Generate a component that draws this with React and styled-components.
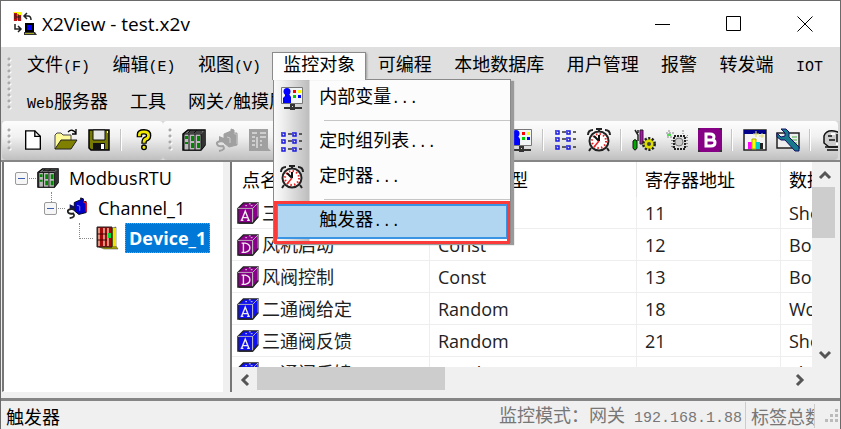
import React, { useState } from "react";
import styled, { createGlobalStyle, css } from "styled-components";

const GlobalStyle = createGlobalStyle`
  * {
    box-sizing: border-box;
  }

  body {
    margin: 0;
    font-family: "Open Sans", "Noto Sans CJK SC", sans-serif;
    font-size: 18px;
    line-height: 24px;
    color: #000;
  }

  button {
    font: inherit;
    color: inherit;
    padding: 0;
    border: none;
    background: none;
  }

  svg {
    display: block;
    flex: none;
  }
`;

const Window = styled.div`
  height: 100vh;
  display: flex;
  flex-direction: column;
  overflow: hidden;
  border: 1px solid #6b6a6b;
  border-bottom: none;
  background: #f0f0f0;
`;

const TitleBar = styled.header`
  height: 46px;
  flex: none;
  display: flex;
  align-items: center;
  padding-left: 12px;
  background: #fff;
`;

const Title = styled.h1`
  flex: 1;
  margin: 0 0 0 5px;
  font-size: 19px;
  font-weight: 400;
`;

const WindowButton = styled.button`
  width: 71px;
  height: 46px;
  display: flex;
  align-items: center;
  justify-content: center;
`;

const MenuBar = styled.nav`
  flex: none;
  display: flex;
  align-items: center;
  height: 74px;
  padding: 0 6px;
  font-family: "Noto Sans CJK SC", sans-serif;
  background: #dfdfdf;
`;

const Grip = styled.span`
  flex: none;
  width: 5px;
  height: ${(props) => props.$height}px;
  margin-right: 4px;
  background-image: radial-gradient(circle at 2px 2px, #aaa 1px, transparent 2px),
    radial-gradient(circle at 3px 3px, #fff 1px, transparent 2px);
  background-size: 5px 6px;
`;

const MenuRows = styled.div`
  flex: 1;
`;

const MenuRow = styled.div`
  height: 37px;
  display: flex;
  align-items: center;
  justify-content: ${(props) => (props.$spread ? "space-between" : "flex-start")};
`;

const MenuSlot = styled.div`
  position: relative;
`;

const MenuButton = styled.button`
  display: block;
  position: relative;
  height: 28px;
  padding: 0 10px 6px;
  line-height: 20px;
  white-space: nowrap;
  border: 1px solid transparent;
  border-bottom: none;

  ${(props) =>
    props.$open &&
    css`
      z-index: 3;
      border-color: #8a8a8a;
      background: #fdfdfd;
      box-shadow: 2px 0 2px -1px #9a9a9a;
    `}
`;

const Mono = styled.span`
  font-family: "Liberation Mono", monospace;
  font-size: 15px;
`;

const Popup = styled.ul`
  position: absolute;
  z-index: 2;
  top: 27px;
  left: 1px;
  width: 238px;
  margin: 0;
  padding: 1px 0 3px;
  list-style: none;
  border: 1px solid #8a8a8a;
  background: linear-gradient(to right, #fafafa, #f0f0f0 8px, #bdbdbd 35px, #fcfcfc 36px);
  box-shadow: 3px 2px 1px #9a9a9a;
`;

const PopupItem = styled.button`
  position: relative;
  width: 100%;
  height: 35px;
  display: flex;
  align-items: center;
  text-align: left;
  white-space: nowrap;

  ${(props) =>
    props.$active &&
    css`
      width: 232px;
      margin: 0 2px;
      border: 2px solid #3a94e4;
      background: #b1d6f2;

      &::after {
        content: "";
        position: absolute;
        inset: -5px -4px -7px;
        border: 3px solid #fb3a3a;
      }
    `}
`;

const PopupIcon = styled.span`
  width: ${(props) => (props.$active ? 41 : 45)}px;
  padding-left: 6px;
`;

const PopupText = styled.span`
  padding-bottom: 2px;
`;

const PopupLine = styled.li`
  height: 9px;
  margin-left: 50px;
  border-bottom: 4px solid #fcfcfc;
  border-top: 4px solid #fcfcfc;
  background: #c6c6c6;
`;

const ToolBar = styled.div`
  flex: none;
  display: flex;
  height: 39px;
  padding: 0 2px 0 1px;
  overflow: hidden;
  background: #d8d8d8;
`;

const ToolGroup = styled.div`
  flex: ${(props) => (props.$grow ? "1 1 0" : "none")};
  min-width: 0;
  overflow: hidden;
  display: flex;
  align-items: center;
  padding: 0 3px 2px 5px;
  border-radius: 4px;
  background: linear-gradient(#fdfdfd, #f1f1f1 40%, #bfbfbf);
`;

const ToolButton = styled.button`
  flex: none;
  width: 33px;
  height: 34px;
  display: flex;
  align-items: center;
  justify-content: center;
`;

const ToolLine = styled.span`
  flex: none;
  width: 2px;
  height: 22px;
  margin: 0 5px;
  border-left: 1px solid #c4c4c4;
  border-right: 1px solid #fff;
`;

const ToolSpace = styled.span`
  flex: none;
  width: 228px;
`;

const Workspace = styled.main`
  flex: 1;
  min-height: 0;
  display: flex;
  gap: 7px;
  padding: 0 3px 6px 1px;
  border-top: 2px solid #868686;
  border-bottom: 3px solid #858585;
`;

const Tree = styled.ul`
  width: 221px;
  flex: none;
  margin: 0;
  padding: 1px 0 0;
  list-style: none;
  border-left: 2px solid #777;
  border-bottom: 1px solid #fff;
  background: #fff;
`;

const TreeRow = styled.li`
  height: 30px;
  display: flex;
  align-items: center;
  padding-left: ${(props) => 11 + props.$level * 29}px;
`;

const Toggle = styled.button`
  position: relative;
  width: 13px;
  height: 13px;
  border: 1px solid #9a9a9a;
  border-radius: 2px;
  background: #f6f6f6;

  &::after {
    content: "";
    position: absolute;
    top: 5px;
    left: 2px;
    width: 7px;
    height: 1px;
    background: #3d5fae;
  }

  &::before {
    content: "";
    position: absolute;
    display: ${(props) => (props.$branch ? "block" : "none")};
    bottom: 12px;
    left: 6px;
    height: 10px;
    border-left: 1px dotted #888;
  }
`;

const Dash = styled.span`
  width: 7px;
  margin: 0 1px;
  border-top: 1px dotted #888;
`;

const Elbow = styled.span`
  width: 14px;
  height: 16px;
  margin: 0 2px 14px 6px;
  border-left: 1px dotted #888;
  border-bottom: 1px dotted #888;
`;

const TreeLabel = styled.span`
  margin-left: 6px;
  padding: 2px 3px;
  border: 1px dotted transparent;

  ${(props) =>
    props.$selected &&
    css`
      font-weight: 700;
      color: #fff;
      border-color: #e08a30;
      background: #0078d7;
    `}
`;

const Grid = styled.section`
  flex: 1;
  min-width: 0;
  display: grid;
  grid-template-columns: minmax(0, 1fr) 25px;
  grid-template-rows: minmax(0, 1fr) 25px;
  border-left: 2px solid #777;
`;

const TableView = styled.div`
  overflow: hidden;
  background: #fff;
`;

const Table = styled.table`
  table-layout: fixed;
  width: 648px;
  border-collapse: separate;
  border-spacing: 0;
`;

const Th = styled.th`
  width: ${(props) => props.$width}px;
  height: 35px;
  padding: 0 0 0 ${(props) => props.$pad}px;
  font-weight: 400;
  text-align: left;
  border-right: 1px solid #e5e5e5;
`;

const Td = styled.td`
  height: 32px;
  padding: 0 0 0 ${(props) => (props.$first ? 5 : 8)}px;
  color: #222;
  border-right: 1px solid #eee;
  border-bottom: 1px solid #eee;
`;

const NameCell = styled.div`
  display: flex;
  align-items: center;
  gap: 3px;
`;

const ScrollBar = styled.div`
  display: flex;
  flex-direction: ${(props) => (props.$vertical ? "column" : "row")};
  justify-content: space-between;
  background: #f0f0f0;
`;

const ScrollStart = styled.div`
  display: flex;
  flex-direction: inherit;
`;

const ScrollArrow = styled.button`
  flex: none;
  width: 25px;
  height: 25px;
  display: flex;
  align-items: center;
  justify-content: center;
`;

const Thumb = styled.div`
  width: ${(props) => props.$width}px;
  height: ${(props) => props.$height}px;
  background: #cdcdcd;
`;

const StatusBar = styled.footer`
  flex: none;
  height: 28px;
  display: flex;
  align-items: center;
  padding: 2px 0 0 5px;
  font-family: "Noto Sans CJK SC", sans-serif;
  white-space: nowrap;
`;

const StatusText = styled.span`
  flex: 1;
`;

const StatusPane = styled.span`
  width: ${(props) => props.$width}px;
  padding-right: 4px;
  margin-right: 5px;
  overflow: hidden;
  color: #777;
  border-right: 1px solid #ccc;
`;

const Svg = ({ size = 24, children, ...rest }) => (
  <svg width={size} height={size} viewBox="0 0 24 24" fill="none" aria-hidden="true" {...rest}>
    {children}
  </svg>
);

const AppIcon = () => (
  <Svg>
    <path d="M0 0h9v9H0z" fill="#ff0" />
    <path d="M1 1h3v8H1zM5 3h3v6H5z" fill="#b11" />
    <path d="M2 2v5M5 2v6M3 5h5" stroke="#222" />
    <path d="M11 4h4q3 0 3 4M14 1l-3 3 3 3M2 12v5h5M5 14l3 3-3 3" stroke="#222" strokeWidth="1.500" />
    <path d="M12 11h9v9h-9z" fill="#000" />
    <path d="M14 13h5v5h-5z" fill="#00f" />
    <path d="M11 20h11l2 3H11z" fill="#333" />
    <path d="M12 21.500h9" stroke="#aa2" />
  </Svg>
);

const NewIcon = () => (
  <Svg size={22}>
    <path d="M4 2h10l6 6v14H4z" fill="#fff" stroke="#000" strokeWidth="1.500" />
    <path d="M14 2v6h6" stroke="#000" strokeWidth="1.500" />
  </Svg>
);

const OpenIcon = () => (
  <Svg>
    <path d="M1 21V7l2-2h4l2 2h8v5" fill="#fffb9a" stroke="#444" />
    <path d="M1 21l6-9h16l-6 9z" fill="#808000" stroke="#222" />
    <path d="M14 4q4-4 8 1M22 1v5h-4" stroke="#000" strokeWidth="1.300" />
  </Svg>
);

const SaveIcon = () => (
  <Svg>
    <path d="M2 2h20v20H4l-2-2z" fill="#777a00" stroke="#000" strokeWidth="1.500" />
    <path d="M6 2h12v10H6z" fill="#e6e6e6" stroke="#111" />
    <path d="M6 15h12v7H6z" fill="#111" />
    <path d="M14 16h3v5h-3z" fill="#fff" />
    <path d="M20 3h1v2h-1z" fill="#fff" />
  </Svg>
);

const HelpIcon = () => (
  <Svg size={22}>
    <path d="M7 9V6q0-3 5-3t5 4q0 3-3 4-2 1-2 5" stroke="#000" strokeWidth="6" />
    <path d="M7 8V6q0-3 5-3t5 4q0 3-3 4-2 1-2 4" stroke="#f0e800" strokeWidth="3" />
    <circle cx="12" cy="20" r="2.500" fill="#f0e800" stroke="#000" strokeWidth="1.500" />
  </Svg>
);

const RackIcon = ({ size }) => (
  <Svg size={size}>
    <path d="M1 6l5-4h17v15l-4 5H1z" fill="#777" stroke="#000" strokeWidth="1.500" />
    <path d="M19 6l4-4v15l-4 5z" fill="#333" />
    <path d="M2 6h17v16H2z" fill="#bbb" stroke="#111" />
    <path d="M7 6v16M13 6v16" stroke="#111" />
    <path d="M3 8h3v3H3zM3 14h3v2H3zM9 8h3v5H9zM9 15h3v5H9zM15 8h3v5h-3zM15 15h3v5h-3z" fill="#080" />
    <path d="M7 4h13M9 2L6 5M15 2l-3 3" stroke="#111" />
  </Svg>
);

const PlugIcon = ({ gray, size }) => (
  <Svg size={size}>
    <path d="M9 6l7-3v-2l3 1v3h3v12l-8 2-5-4z" fill={gray ? "#a0a0a0" : "#0000c8"} stroke={gray ? "#a0a0a0" : "#001"} />
    <path d="M4 8l5 2v5l-5-2z" fill={gray ? "#a0a0a0" : "#115"} />
    <path d="M19 5l3 2v9" stroke={gray ? "#bbb" : "#e11"} strokeWidth="1.500" />
    <path d="M12 9l3 1v5" stroke={gray ? "#ccc" : "#77f"} />
    <path d="M9 13q-8 0-7 3t6 2q3 4-4 5" stroke={gray ? "#a0a0a0" : "#222"} strokeWidth="2" />
  </Svg>
);

const GrayRackIcon = () => (
  <Svg>
    <path d="M1 1h19v19l3 3H1z" fill="#a0a0a0" />
    <path d="M4 5h5M12 5h6M4 9h3M4 13h3M4 17h3M9 9v11M12 9h6M12 13h2M12 17h2" stroke="#ddd" strokeWidth="1.500" />
  </Svg>
);

const BoardIcon = () => (
  <Svg>
    <path d="M13 19h1v4h-3v-4zM4 22h18" stroke="#333" strokeWidth="2" />
    <path d="M1.500 1.500h21v16h-21z" fill="#f2f5f5" stroke="#777" />
    <circle cx="7" cy="5.500" r="3.500" fill="#00f" />
    <path d="M5 8h4l2 3v6H3v-5l2-2z" fill="#00f" />
    <path d="M13 4h3v3h-3z" fill="#f00" />
    <path d="M18 4h3v3h-3z" fill="#ff0" />
    <path d="M13 9h3v3h-3z" fill="#0c0" />
    <path d="M18 9h3v3h-3z" fill="#00f" />
  </Svg>
);

const ListIcon = () => (
  <Svg>
    {[3, 10, 18].map((y) => (
      <g key={y} strokeWidth="1.500">
        <path d={`M2 ${y - 1}v4h3v-3h-2M13 ${y - 1}v4h3v-3h-2`} stroke="#1a1ae0" />
        <path d={`M8 ${y + 1}h4M19 ${y + 1}h3`} stroke="#333" />
      </g>
    ))}
  </Svg>
);

const ClockIcon = () => (
  <Svg>
    <path d="M1 7q0-5 5-5M18 2q5 0 5 5M12 0v4M9 1h6M4 20l-2 3M20 20l2 3" stroke="#222" strokeWidth="2" />
    <circle cx="12" cy="13" r="9.500" fill="#fff" stroke="#222" strokeWidth="2" />
    <circle cx="12" cy="13" r="7" stroke="#e22" strokeWidth="2" strokeDasharray="1.500 2.200" />
    <path d="M12 13L7 8M12 13V7" stroke="#111" strokeWidth="2" />
    <path d="M12 13l-5 6" stroke="#e22" strokeWidth="1.500" />
  </Svg>
);

const GearIcon = () => (
  <Svg>
    <path d="M3 2l3 5v6M6 2v3" stroke="#222" strokeWidth="1.500" />
    <path d="M1 13q2-3 4 0v7q-2 4-4 0z" fill="#0a0" stroke="#111" />
    <path d="M8 2h3v14H8z" fill="#c0c" stroke="#222" />
    <circle cx="17" cy="16" r="5.500" fill="#cc0" stroke="#222" strokeWidth="3" strokeDasharray="2 1.500" />
    <circle cx="17" cy="16" r="4.500" fill="#dd0" />
    <circle cx="17" cy="16" r="2" fill="#444" />
  </Svg>
);

const FrameIcon = () => (
  <Svg>
    <path d="M1 5h8M4 2v6M18 2v4M2 9h6M7 19h14M20 10l3-3" stroke="#888" strokeDasharray="2 1" />
    <path d="M2 7h4" stroke="#5d5" strokeWidth="2" />
    <path d="M9 8h11v13H9z" fill="#ddd" stroke="#222" strokeWidth="2" strokeDasharray="2 1" />
    <circle cx="14" cy="14" r="4" fill="#ccc" stroke="#777" />
    <path d="M7 12v8M22 9v12" stroke="#333" strokeDasharray="1 2" />
  </Svg>
);

const BlockIcon = () => (
  <Svg>
    <path d="M0 0h24v24H0z" fill="#850085" />
    <path d="M0 0h2v2H0zM22 0h2v2h-2zM0 22h2v2H0zM22 22h2v2h-2z" fill="#333" />
    <path d="M8 6v12h5q4 0 4-3.500 0-2.500-3-2.500 2-1 2-3Q16 6 12 6zM8 12h6" stroke="#fff" strokeWidth="3" />
  </Svg>
);

const ChartIcon = () => (
  <Svg>
    <path d="M1 2h22v20H1z" fill="#f4f4f4" stroke="#222" strokeWidth="1.500" />
    <path d="M1 2h22v4H1z" fill="#00008b" />
    <path d="M5 14h4v7H5z" fill="#f0f" />
    <path d="M9 11h4v10H9z" fill="#ff0" stroke="#aa0" />
    <path d="M13 14h4v7h-4z" fill="#0cc" />
    <path d="M17 15h3v6h-3z" fill="#222" />
    <path d="M13 3v6M10 6h6M19 5v5M16 8h5" stroke="#dd6" />
  </Svg>
);

const WrenchIcon = () => (
  <Svg>
    <path d="M1 5h22v15H1z" fill="#eee" stroke="#222" strokeWidth="1.500" />
    <path d="M16 9h5M16 12h5M16 15h5" stroke="#4a4" />
    <path d="M5 1h5l3 3v5l10 10v4h-4L9 12H5L1 9V5l4 4 4-1V5z" fill="#167a8c" stroke="#116" />
  </Svg>
);

const HeadIcon = () => (
  <Svg>
    <path d="M3 15V8q2-6 10-5 8 1 8 9l-2 7H8z" fill="#ccc" stroke="#111" strokeWidth="1.500" />
    <path d="M4 19h18M6 22h16M7 8h4M8 12h6M16 6v8" stroke="#111" strokeWidth="1.500" />
    <path d="M10 6h4M15 16h4" stroke="#fff" strokeWidth="2" />
  </Svg>
);

const DeviceIcon = () => (
  <Svg>
    <path d="M17 2l4-1v19l2 3H9l-5-2h13z" fill="#a39b00" stroke="#444" strokeWidth=".5" />
    <path d="M2 1h15v20H2z" fill="#a00a0a" stroke="#222" />
    <path d="M4 2v18M9 2v18M13 2v18" stroke="#e8c2a8" strokeWidth="1.500" />
    <path d="M2 8h10M2 14h10" stroke="#400" />
    <path d="M13 7h3v5h-3z" fill="#0d3" />
    <path d="M18 2h3v18h-3z" fill="#f1e500" />
  </Svg>
);

const TagIcon = ({ color, kind }) => (
  <Svg size={22}>
    <path d="M1 7l6-6h16v15l-6 7H1z" fill={color} stroke="#222" strokeWidth="1.500" />
    <path d="M17 7l6-6v15l-6 7z" fill={color} stroke="#bbb" />
    <path d="M1 7h16v15" stroke="#bbb" />
    <path d="M9 4h2M15 4h2M13 2h2" stroke="#ddd" />
    {kind === "A" ? (
      <path d="M4 20h3M11 20h3M5 20l4-10 4 10M6 17h6" stroke="#eee" strokeWidth="1.500" />
    ) : (
      <path d="M5 10h4q5 1 5 5t-5 5H5M7 10v10" stroke="#eee" strokeWidth="1.500" />
    )}
    <path d="M2 23h15l6-7" stroke="#222" strokeWidth="1.500" />
  </Svg>
);

const Chevron = ({ turn }) => (
  <svg width="16" height="16" viewBox="0 0 16 16" fill="none" aria-hidden="true">
    <path d="M3 11l5-5 5 5" stroke="#555" strokeWidth="3" transform={`rotate(${turn} 8 8)`} />
  </svg>
);

const menuTop = [
  { text: "文件", key: "(F)" },
  { text: "编辑", key: "(E)" },
  { text: "视图", key: "(V)" },
  { text: "监控对象", popup: true },
  { text: "可编程" },
  { text: "本地数据库" },
  { text: "用户管理" },
  { text: "报警" },
  { text: "转发端" },
  { key: "IOT" },
];

const popupItems = [
  { text: "内部变量", icon: <BoardIcon />, line: true },
  { text: "定时组列表", icon: <ListIcon /> },
  { text: "定时器", icon: <ClockIcon />, line: true },
  { text: "触发器", active: true },
];

const tools = [
  ["变量", <BoardIcon />, true],
  ["定时组", <ListIcon />],
  ["定时器", <ClockIcon />, true],
  ["触发", <GearIcon />],
  ["区域", <FrameIcon />],
  ["块", <BlockIcon />, true],
  ["图表", <ChartIcon />],
  ["工具", <WrenchIcon />, true],
  ["用户", <HeadIcon />],
];

const points = [
  { name: "三通阀给定", kind: "A", type: "Const", address: 11, data: "Short" },
  { name: "风机启动", kind: "D", type: "Const", address: 12, data: "Bool" },
  { name: "风阀控制", kind: "D", type: "Const", address: 13, data: "Bool" },
  { name: "二通阀给定", kind: "A", type: "Random", address: 18, data: "Word" },
  { name: "三通阀反馈", kind: "A", type: "Random", address: 21, data: "Short" },
  { name: "二通阀反馈", kind: "A", type: "Random", address: 22, data: "Short" },
];

const App = () => {
  const [open, setOpen] = useState(true);

  return (
    <>
      <GlobalStyle />
      <Window>
        <TitleBar>
          <AppIcon />
          <Title>X2View - test.x2v</Title>
          <WindowButton aria-label="最小化">
            <svg width="16" height="16" stroke="#000" shapeRendering="crispEdges">
              <path d="M0 8.500h15" />
            </svg>
          </WindowButton>
          <WindowButton aria-label="最大化">
            <svg width="16" height="16" stroke="#000" fill="none">
              <path d="M.5.5h14v14H.5z" />
            </svg>
          </WindowButton>
          <WindowButton aria-label="关闭">
            <svg width="16" height="16" stroke="#000">
              <path d="M.5.5l15 15M15.500.5l-15 15" />
            </svg>
          </WindowButton>
        </TitleBar>

        <MenuBar>
          <Grip $height={54} />
          <MenuRows>
            <MenuRow $spread>
              {menuTop.map((item) => (
                <MenuSlot key={item.text || item.key}>
                  <MenuButton
                    $open={item.popup && open}
                    onClick={() => item.popup && setOpen(!open)}
                  >
                    {item.text}
                    {item.key && <Mono>{item.key}</Mono>}
                  </MenuButton>
                  {item.popup && open && (
                    <Popup>
                      {popupItems.map((entry) => (
                        <React.Fragment key={entry.text}>
                          <li>
                            <PopupItem $active={entry.active}>
                              <PopupIcon $active={entry.active}>{entry.icon}</PopupIcon>
                              <PopupText>
                                {entry.text}
                                <Mono>...</Mono>
                              </PopupText>
                            </PopupItem>
                          </li>
                          {entry.line && <PopupLine />}
                        </React.Fragment>
                      ))}
                    </Popup>
                  )}
                </MenuSlot>
              ))}
            </MenuRow>
            <MenuRow>
              <MenuButton>
                <Mono>Web</Mono>服务器
              </MenuButton>
              <MenuButton>工具</MenuButton>
              <MenuButton>
                网关<Mono>/</Mono>触摸屏
              </MenuButton>
            </MenuRow>
          </MenuRows>
        </MenuBar>

        <ToolBar>
          <ToolGroup>
            <Grip $height={24} />
            <ToolButton aria-label="新建"><NewIcon /></ToolButton>
            <ToolButton aria-label="打开"><OpenIcon /></ToolButton>
            <ToolButton aria-label="保存"><SaveIcon /></ToolButton>
            <ToolLine />
            <ToolButton aria-label="帮助"><HelpIcon /></ToolButton>
          </ToolGroup>
          <ToolGroup $grow>
            <Grip $height={24} />
            <ToolButton aria-label="驱动"><RackIcon /></ToolButton>
            <ToolButton aria-label="通道"><PlugIcon gray /></ToolButton>
            <ToolButton aria-label="设备"><GrayRackIcon /></ToolButton>
            <ToolSpace />
            {tools.map(([label, icon, line]) => (
              <React.Fragment key={label}>
                <ToolButton aria-label={label}>{icon}</ToolButton>
                {line && <ToolLine />}
              </React.Fragment>
            ))}
          </ToolGroup>
        </ToolBar>

        <Workspace>
          <Tree>
            <TreeRow $level={0}>
              <Toggle aria-label="折叠 ModbusRTU" />
              <Dash />
              <RackIcon size={22} />
              <TreeLabel>ModbusRTU</TreeLabel>
            </TreeRow>
            <TreeRow $level={1}>
              <Toggle $branch aria-label="折叠 Channel_1" />
              <Dash />
              <PlugIcon size={22} />
              <TreeLabel>Channel_1</TreeLabel>
            </TreeRow>
            <TreeRow $level={2}>
              <Elbow />
              <DeviceIcon />
              <TreeLabel $selected>Device_1</TreeLabel>
            </TreeRow>
          </Tree>

          <Grid>
            <TableView>
              <Table>
                <thead>
                  <tr>
                    <Th $width={198} $pad={10}>点名</Th>
                    <Th $width={207} $pad={8}>寄存器类型</Th>
                    <Th $width={144} $pad={8}>寄存器地址</Th>
                    <Th $width={99} $pad={8}>数据类型</Th>
                  </tr>
                </thead>
                <tbody>
                  {points.map((point) => (
                    <tr key={point.address}>
                      <Td $first>
                        <NameCell>
                          <TagIcon
                            kind={point.kind}
                            color={point.type === "Const" ? "#8b008b" : "#1010f0"}
                          />
                          {point.name}
                        </NameCell>
                      </Td>
                      <Td>{point.type}</Td>
                      <Td>{point.address}</Td>
                      <Td>{point.data}</Td>
                    </tr>
                  ))}
                </tbody>
              </Table>
            </TableView>
            <ScrollBar $vertical>
              <ScrollStart>
                <ScrollArrow aria-label="向上"><Chevron turn={0} /></ScrollArrow>
                <Thumb $width={23} $height={51} />
              </ScrollStart>
              <ScrollArrow aria-label="向下"><Chevron turn={180} /></ScrollArrow>
            </ScrollBar>
            <ScrollBar>
              <ScrollStart>
                <ScrollArrow aria-label="向左"><Chevron turn={270} /></ScrollArrow>
                <Thumb $width={188} $height={23} />
              </ScrollStart>
              <ScrollArrow aria-label="向右"><Chevron turn={90} /></ScrollArrow>
            </ScrollBar>
          </Grid>
        </Workspace>

        <StatusBar>
          <StatusText>触发器</StatusText>
          <StatusPane $width={247}>
            监控模式：网关<Mono> 192.168.1.88</Mono>
          </StatusPane>
          <StatusPane $width={64}>标签总数</StatusPane>
          <svg width="20" height="20" fill="#bbb" aria-hidden="true">
            <path d="M15 3h3v3h-3zM10 8h3v3h-3zM15 8h3v3h-3zM5 13h3v3H5zM10 13h3v3h-3zM15 13h3v3h-3z" />
          </svg>
        </StatusBar>
      </Window>
    </>
  );
};

export default App;
